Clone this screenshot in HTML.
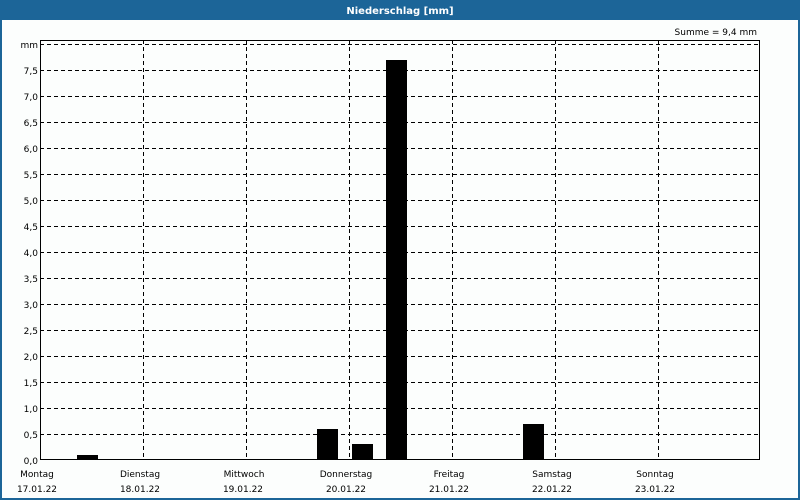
<!DOCTYPE html>
<html><head><meta charset="utf-8"><style>
html,body{margin:0;padding:0;background:#fff;}
svg{display:block;font-family:"DejaVu Sans","Liberation Sans",sans-serif;}
</style></head><body>
<svg width="800" height="500" viewBox="0 0 800 500">
<rect x="0" y="0" width="800" height="500" fill="#1c6598"/>
<rect x="2" y="20" width="796" height="478" fill="#fcfefd"/>
<text x="400" y="14" fill="#fff" font-size="10" font-weight="bold" text-anchor="middle">Niederschlag [mm]</text>
<text x="757" y="35" fill="#000" font-size="9" text-anchor="end">Summe = 9,4 mm</text>
<g stroke="#000" stroke-width="1" stroke-dasharray="4,3" shape-rendering="crispEdges">
<line x1="40" y1="44.5" x2="760" y2="44.5"/>
<line x1="40" y1="70.5" x2="760" y2="70.5"/>
<line x1="40" y1="96.5" x2="760" y2="96.5"/>
<line x1="40" y1="122.5" x2="760" y2="122.5"/>
<line x1="40" y1="148.5" x2="760" y2="148.5"/>
<line x1="40" y1="174.5" x2="760" y2="174.5"/>
<line x1="40" y1="200.5" x2="760" y2="200.5"/>
<line x1="40" y1="226.5" x2="760" y2="226.5"/>
<line x1="40" y1="252.5" x2="760" y2="252.5"/>
<line x1="40" y1="278.5" x2="760" y2="278.5"/>
<line x1="40" y1="304.5" x2="760" y2="304.5"/>
<line x1="40" y1="330.5" x2="760" y2="330.5"/>
<line x1="40" y1="356.5" x2="760" y2="356.5"/>
<line x1="40" y1="382.5" x2="760" y2="382.5"/>
<line x1="40" y1="408.5" x2="760" y2="408.5"/>
<line x1="40" y1="434.5" x2="760" y2="434.5"/>
<line x1="143.5" y1="40" x2="143.5" y2="460"/>
<line x1="246.5" y1="40" x2="246.5" y2="460"/>
<line x1="349.5" y1="40" x2="349.5" y2="460"/>
<line x1="452.5" y1="40" x2="452.5" y2="460"/>
<line x1="555.5" y1="40" x2="555.5" y2="460"/>
<line x1="658.5" y1="40" x2="658.5" y2="460"/>
</g>
<g fill="#000" shape-rendering="crispEdges">
<rect x="77" y="455" width="21" height="5"/>
<rect x="317" y="429" width="21" height="31"/>
<rect x="352" y="444" width="21" height="16"/>
<rect x="386" y="60" width="21" height="400"/>
<rect x="523" y="424" width="21" height="36"/>
</g>
<rect x="40.5" y="40.5" width="719" height="419" fill="none" stroke="#000" shape-rendering="crispEdges"/>
<g font-size="9" fill="#000" text-anchor="end">
<text x="38" y="48">mm</text>
<text x="38" y="74">7,5</text><text x="38" y="100">7,0</text><text x="38" y="126">6,5</text>
<text x="38" y="152">6,0</text><text x="38" y="178">5,5</text><text x="38" y="204">5,0</text>
<text x="38" y="230">4,5</text><text x="38" y="256">4,0</text><text x="38" y="282">3,5</text>
<text x="38" y="308">3,0</text><text x="38" y="334">2,5</text><text x="38" y="360">2,0</text>
<text x="38" y="386">1,5</text><text x="38" y="412">1,0</text><text x="38" y="438">0,5</text>
<text x="38" y="464">0,0</text>
</g>
<g font-size="9" fill="#000" text-anchor="middle">
<text x="37" y="477">Montag</text><text x="37" y="492">17.01.22</text>
<text x="140" y="477">Dienstag</text><text x="140" y="492">18.01.22</text>
<text x="244" y="477">Mittwoch</text><text x="243" y="492">19.01.22</text>
<text x="346" y="477">Donnerstag</text><text x="346" y="492">20.01.22</text>
<text x="449" y="477">Freitag</text><text x="449" y="492">21.01.22</text>
<text x="552" y="477">Samstag</text><text x="552" y="492">22.01.22</text>
<text x="655" y="477">Sonntag</text><text x="655" y="492">23.01.22</text>
</g>
</svg>
</body></html>
